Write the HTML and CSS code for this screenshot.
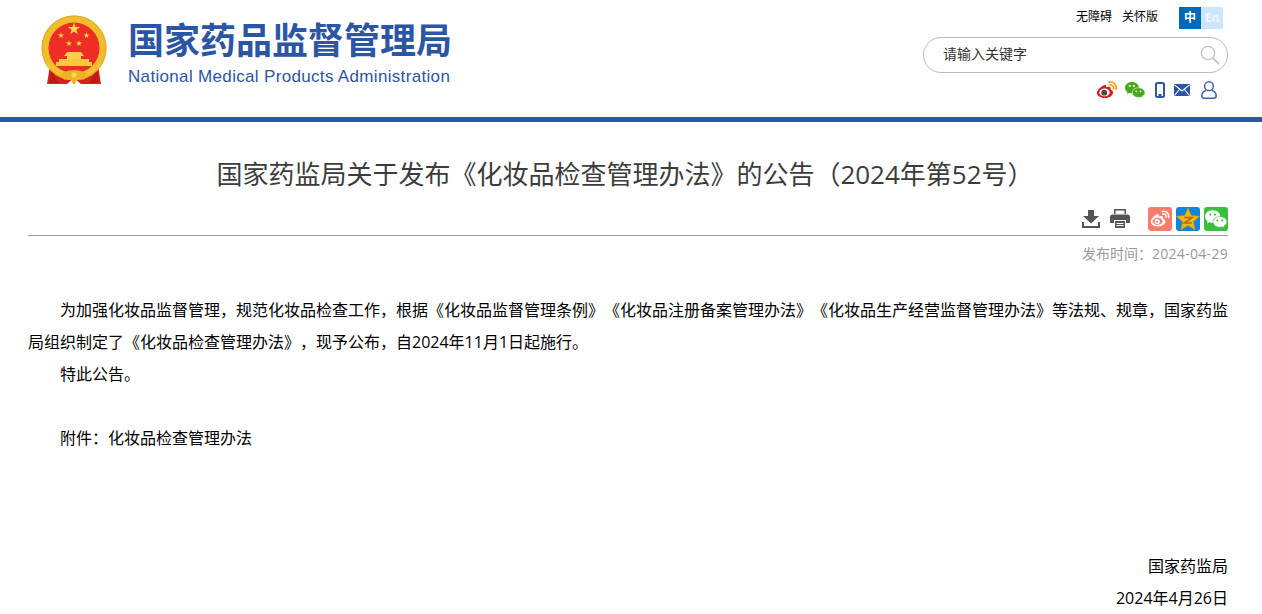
FILE: index.html
```html
<!DOCTYPE html>
<html lang="zh-CN">
  <head>
    <meta charset="UTF-8" />
    <title>国家药监局关于发布《化妆品检查管理办法》的公告（2024年第52号）</title>
    <link rel="stylesheet" href="styles.css">
  </head>
  <body>
    <header class="header">
      <div class="logo">
        <svg class="emblem" width="66" height="70" viewBox="0 0 66 70">
          <defs>
            <polygon id="star" points="0,-1 0.225,-0.31 0.95,-0.31 0.363,0.118 0.588,0.809 0,0.382 -0.588,0.809 -0.363,0.118 -0.95,-0.31 -0.225,-0.31" fill="#f9d84e"/>
          </defs>
          <path d="M9 50 L6 69 L26 69 L33 63 L40 69 L60 69 L57 50 Z" fill="#d8211b"/>
          <path d="M10 56 L8 68 L18 68 Z M56 56 L58 68 L48 68 Z" fill="#b81a16"/>
          <circle cx="33" cy="33" r="32.500" fill="#f2bd2c"/>
          <circle cx="33" cy="33" r="32" fill="none" stroke="#e5a324" stroke-width="1"/>
          <circle cx="33" cy="33" r="25.500" fill="#ee2d26"/>
          <use href="#star" transform="translate(33 14) scale(6.500)"/>
          <use href="#star" transform="translate(20 20.500) scale(3.200)"/>
          <use href="#star" transform="translate(45.500 20.500) scale(3.200)"/>
          <use href="#star" transform="translate(28 28.500) scale(3.200)"/>
          <use href="#star" transform="translate(38 28.500) scale(3.200)"/>
          <path d="M26 37 H40 L43 41 H40 V44 H23 H26 V41 H23 Z" fill="#f7d14c"/>
          <path d="M18 44 H48 V47 H51 V51 H15 V47 H18 Z" fill="#f6c93f"/>
          <path d="M6 46 Q33 70 60 46 L60 52 Q33 74 6 52 Z" fill="#f3c02f"/>
          <path d="M21 58 Q33 52 45 58 L43 65 L37 62 L34 69 H32 L29 62 L23 65 Z" fill="#edb326"/>
          <circle cx="33" cy="60" r="2.500" fill="#f9d84e"/>
        </svg>
        <div class="logo-text">
          <div class="logo-cn">国家药品监督管理局</div>
          <div class="logo-en">National Medical Products Administration</div>
        </div>
      </div>
      <div class="tools">
        <div class="top-links">
          <a>无障碍</a>
          <a>关怀版</a>
          <div class="lang"><span class="lang-on">中</span><span class="lang-off">En</span></div>
        </div>
        <div class="search">
          <span class="search-text">请输入关键字</span>
          <svg width="20" height="20" viewBox="0 0 20 20" fill="none" stroke="#c4c4c4">
            <circle cx="8" cy="8" r="6.700" stroke-width="1.300"/>
            <path d="M12.800 12.800 L19 19" stroke-width="1.800"/>
          </svg>
        </div>
        <div class="follow">
          <svg class="ico-weibo" width="20" height="17" viewBox="0 0 20 17">
            <path d="M8.500 4 C4.500 4.500 0 9 0 12 C0 15.500 4.500 17 8 17 C12.500 17 16 14.500 16 11.500 C16 9.700 14.500 9 13.500 8.800 C14.200 7 13.500 5.500 11 5.800 C10 5.900 9.300 6.300 8.800 6.500 C9.300 5 9.500 4 8.500 4 Z" fill="#e0141b"/>
            <ellipse cx="7.500" cy="11.500" rx="5.200" ry="3.900" fill="#fff"/>
            <circle cx="7.200" cy="11.700" r="2.900" fill="#4a4a4a"/>
            <path d="M12 1.200 C16 0 20 3.500 19 8 M12.500 4 C15 3.300 17.200 5.200 16.400 7.800" fill="none" stroke="#f2a81d" stroke-width="1.800" stroke-linecap="round"/>
          </svg>
          <svg class="ico-wechat" width="20" height="16" viewBox="0 0 20 16">
            <path d="M7 0 C3 0 0 2.600 0 5.800 C0 7.600 1 9.100 2.400 10.100 L1.800 12 L4.100 10.900 C5 11.200 6 11.400 7 11.400 C11 11.400 14 8.900 14 5.700 C14 2.500 11 0 7 0 Z" fill="#4da71c"/>
            <path d="M13.500 5.800 C10 5.800 7.300 8 7.300 10.700 C7.300 13.400 10 15.500 13.500 15.500 C14.200 15.500 14.900 15.400 15.600 15.200 L17.600 16 L17.100 14.400 C18.800 13.500 20 12.200 20 10.700 C20 8 17 5.800 13.500 5.800 Z" fill="#4da71c" stroke="#fff" stroke-width="0.600"/>
            <circle cx="4.800" cy="4" r="1" fill="#fff"/>
            <circle cx="9" cy="4" r="1" fill="#fff"/>
            <circle cx="11.300" cy="9.300" r="0.900" fill="#fff"/>
            <circle cx="15.500" cy="9.300" r="0.900" fill="#fff"/>
          </svg>
          <svg class="ico-phone" width="10" height="16" viewBox="0 0 10 16">
            <rect x="1" y="1" width="8" height="14" rx="1.500" fill="none" stroke="#2b56a5" stroke-width="2"/>
            <rect x="3.500" y="12" width="3" height="2" fill="#2b56a5"/>
          </svg>
          <svg class="ico-mail" width="16" height="12" viewBox="0 0 16 12">
            <rect width="16" height="12" rx="1" fill="#2b56a5"/>
            <path d="M0.500 0.800 L8 7 L15.500 0.800 M0.500 11.500 L5.500 5.500 M15.500 11.500 L10.500 5.500" fill="none" stroke="#fff" stroke-width="1.100"/>
          </svg>
          <svg class="ico-user" width="16" height="18" viewBox="0 0 16 18" fill="none" stroke="#3f63ab" stroke-width="1.500">
            <circle cx="8" cy="5.200" r="4.400"/>
            <path d="M5 9.500 C2 10.500 0.800 12.800 0.800 14.800 C0.800 16.300 1.500 17.200 3 17.200 H13 C14.500 17.200 15.200 16.300 15.200 14.800 C15.200 12.800 14 10.500 11 9.500"/>
          </svg>
        </div>
      </div>
    </header>

    <main class="article">
      <h1 class="title">国家药监局关于发布《化妆品检查管理办法》的公告（2024年第52号）</h1>
      <div class="share">
        <svg class="ico-down" width="18" height="18" viewBox="0 0 18 18" fill="#555">
          <path d="M6 0 H12 V6 H17 L9 13.500 L1 6 H6 Z"/>
          <path d="M0 12 H2 V16 H16 V12 H18 V18 H0 Z"/>
        </svg>
        <svg class="ico-print" width="20" height="19" viewBox="0 0 20 19" fill="#555">
          <path d="M4 0 H16 V5 H14.500 V1.500 H5.500 V5 H4 Z"/>
          <path d="M2.500 5.500 H17.500 C19 5.500 20 6.500 20 8 V14 H16 V11 H4 V14 H0 V8 C0 6.500 1 5.500 2.500 5.500 Z"/>
          <path d="M5 12 H15 V19 H5 Z M6.500 14 V15 H13.500 V14 Z M6.500 16 V17 H13.500 V16 Z" fill-rule="evenodd"/>
        </svg>
        <div class="share-icons">
          <span class="badge badge-weibo">
            <svg width="20" height="17" viewBox="0 0 20 17">
              <path d="M8 4 C4.500 5 0.500 9 0.800 12 C1.200 15.300 5 16.500 8 16.400 C12 16.200 15.500 14 15.500 11.500 C15.500 9.700 13.800 9 13 8.800 C13.700 7 13 5.800 11 6 C10 6.100 9 6.600 8.500 6.800 C9 5.400 9 4 8 4 Z" fill="#fff"/>
              <ellipse cx="7.500" cy="11.300" rx="4.800" ry="3.600" fill="#fa7d6c"/>
              <circle cx="7.200" cy="11.500" r="2.600" fill="#fff"/>
              <circle cx="6.800" cy="11.800" r="1.100" fill="#fa7d6c"/>
              <path d="M12.500 1.500 C16 0.500 19.500 3.500 18.500 7.500 M12.800 4.200 C15 3.500 16.700 5.200 16 7.200" fill="none" stroke="#fff" stroke-width="1.500" stroke-linecap="round"/>
            </svg>
          </span>
          <span class="badge badge-qzone">
            <svg width="24" height="24" viewBox="0 0 24 24">
              <polygon points="12,1 15.300,8.400 23.500,9.200 17.400,14.700 19.100,22.800 12,18.600 4.900,22.800 6.600,14.700 0.500,9.200 8.700,8.400" fill="#f7b51c" stroke="#e08a0c" stroke-width="0.600"/>
              <path d="M8 10.500 H16 L8.500 16 H16" fill="none" stroke="#a8720a" stroke-width="1.600"/>
            </svg>
          </span>
          <span class="badge badge-wechat">
            <svg width="22" height="18" viewBox="0 0 20 16">
              <path d="M7 0 C3 0 0 2.600 0 5.800 C0 7.600 1 9.100 2.400 10.100 L1.800 12 L4.100 10.900 C5 11.200 6 11.400 7 11.400 C11 11.400 14 8.900 14 5.700 C14 2.500 11 0 7 0 Z" fill="#fff"/>
              <path d="M13.500 5.800 C10 5.800 7.300 8 7.300 10.700 C7.300 13.400 10 15.500 13.500 15.500 C14.200 15.500 14.900 15.400 15.600 15.200 L17.600 16 L17.100 14.400 C18.800 13.500 20 12.200 20 10.700 C20 8 17 5.800 13.500 5.800 Z" fill="#fff" stroke="#38c03d" stroke-width="0.600"/>
              <circle cx="4.800" cy="4" r="1" fill="#38c03d"/>
              <circle cx="9" cy="4" r="1" fill="#38c03d"/>
              <circle cx="11.300" cy="9.300" r="0.900" fill="#38c03d"/>
              <circle cx="15.500" cy="9.300" r="0.900" fill="#38c03d"/>
            </svg>
          </span>
        </div>
      </div>
      <div class="pub-time">发布时间：<span class="pub-date">2024-04-29</span></div>
      <div class="content">
        <p class="para">为加强化妆品监督管理，规范化妆品检查工作，根据《化妆品监督管理条例》《化妆品注册备案管理办法》《化妆品生产经营监督管理办法》等法规、规章，国家药监局组织制定了《化妆品检查管理办法》，现予公布，自2024年11月1日起施行。</p>
        <p class="para">特此公告。</p>
        <p class="para blank"></p>
        <p class="para">附件：化妆品检查管理办法</p>
        <p class="sign">国家药监局</p>
        <p class="date">2024年4月26日</p>
      </div>
    </main>
  </body>
</html>
```

FILE: styles.css
```css
* {
  margin: 0;
  padding: 0;
}
html, body {
  height: 614px;
  overflow: hidden;
}
body {
  background: #fff;
  color: #000;
  font-family: "Open Sans", "Noto Sans CJK SC", sans-serif;
  text-spacing-trim: space-all;
}
a {
  color: #000;
}
.header {
  display: flex;
  justify-content: space-between;
  height: 117px;
  padding: 0 34px 0 41px;
  border-bottom: 5px solid #2b56a5;
}
.logo {
  display: flex;
  padding-top: 15px;
}
.emblem {
  margin-right: 21px;
}
.logo-text {
  padding-top: 4px;
}
.logo-cn {
  font-size: 36px;
  line-height: 44px;
  font-weight: 700;
  color: #2b56a5;
  white-space: nowrap;
}
.logo-en {
  font-family: "Liberation Sans", sans-serif;
  font-size: 17px;
  line-height: 20px;
  letter-spacing: 0.33px;
  color: #2b56a5;
  white-space: nowrap;
  margin-top: 4px;
}
.tools {
  width: 305px;
  padding-top: 7px;
}
.top-links {
  display: flex;
  justify-content: flex-end;
  font-size: 12px;
  line-height: 20px;
  height: 22px;
  padding-right: 5px;
}
.top-links a {
  margin-right: 10px;
}
.lang {
  display: flex;
  margin-left: 11px;
  line-height: 22px;
  font-weight: 700;
  text-align: center;
}
.lang span {
  width: 22px;
  height: 22px;
}
.lang-on {
  background: #0069b9;
  color: #fff;
}
.lang-off {
  background: #cce6ff;
  color: #eef6ff;
}
.search {
  display: flex;
  justify-content: space-between;
  align-items: center;
  height: 34px;
  margin-top: 8px;
  padding: 0 7px 0 19px;
  border: 1px solid #bbb;
  border-radius: 18px;
  font-size: 14px;
  line-height: 32px;
  color: #333;
}
.search-text {
  margin-top: -2px;
}
.follow {
  display: flex;
  justify-content: flex-end;
  align-items: center;
  height: 17px;
  margin-top: 8px;
  padding-right: 11px;
}
.ico-wechat { margin-left: 8px; }
.ico-phone { margin-left: 10px; }
.ico-mail { margin-left: 9px; }
.ico-user { margin-left: 11px; }

.article {
  width: 1200px;
  margin-left: 28px;
}
.title {
  font-size: 26px;
  line-height: 36px;
  font-weight: 400;
  color: #3c3c3c;
  text-align: center;
  margin-top: 34px;
  margin-left: -6px;
  white-space: nowrap;
}
.share {
  display: flex;
  justify-content: flex-end;
  align-items: center;
  height: 23px;
  margin-top: 15px;
  padding-bottom: 5px;
  border-bottom: 1px solid #999;
}
.ico-print {
  margin-left: 10px;
}
.share-icons {
  display: flex;
  gap: 4px;
  margin-left: 18px;
}
.badge {
  display: flex;
  align-items: center;
  justify-content: center;
  width: 24px;
  height: 24px;
  border-radius: 3px;
}
.badge-weibo { background: #fa7d6c; }
.badge-qzone { background: #0d87dd; }
.badge-wechat { background: #38c03d; }
.pub-time {
  font-size: 14px;
  line-height: 20px;
  color: #999;
  text-align: right;
  margin-top: 8px;
}
.pub-date {
  letter-spacing: 0.3px;
}
.content {
  margin-top: 30px;
  font-size: 16px;
  line-height: 32px;
}
.para {
  text-indent: 2em;
  text-align: justify;
  min-height: 32px;
}
.sign {
  text-align: right;
  margin-top: 96px;
}
.date {
  text-align: right;
}
```
